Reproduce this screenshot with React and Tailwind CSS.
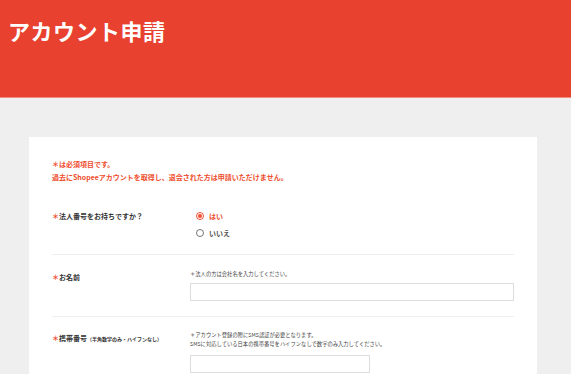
import React, { useState } from 'react'

const font = { fontFamily: '"Noto Sans CJK JP", "Noto Sans", sans-serif' }

function Radio({ checked, label, onClick }) {
  return (
    <button onClick={onClick} className="flex items-center gap-[5px] h-[10px]">
      <span
        className={
          'w-[8px] h-[8px] rounded-full border flex items-center justify-center ' +
          (checked ? 'border-[#ee4d2d]' : 'border-[#777]')
        }
      >
        {checked && <span className="w-[4px] h-[4px] rounded-full bg-[#ee4d2d]" />}
      </span>
      <span className={'text-[7px] font-bold ' + (checked ? 'text-[#ee4d2d]' : 'text-[#555]')}>{label}</span>
    </button>
  )
}

export default function App() {
  const [hasNumber, setHasNumber] = useState(true)

  return (
    <div className="min-h-[374px] bg-[#efefef]" style={font}>
      <div className="h-[98px] bg-[#e9412f] border-b border-[#f28c7e] pl-[8px] pt-[14px]">
        <h1 className="text-[22px] leading-[32px] font-bold text-white tracking-[0.5px]">アカウント申請</h1>
      </div>

      <div className="ml-[29px] mt-[39px] w-[508px] bg-white px-[23px] pt-[21px] pb-[20px]">
        <div className="text-[7px] leading-[13px] font-bold text-[#ee4d2d]">
          <p>＊は必須項目です。</p>
          <p>過去にShopeeアカウントを取得し、退会された方は申請いただけません。</p>
        </div>

        <div className="mt-[26px] flex border-b border-[#eeeeee] pb-[16px]">
          <div className="w-[142px] text-[7px] leading-[12px] font-bold text-[#333]">
            <span className="text-[#ee4d2d]">＊</span>法人番号をお持ちですか？
          </div>
          <div className="flex flex-col gap-[7px] pl-[2px] pt-[1px]">
            <Radio checked={hasNumber} label="はい" onClick={() => setHasNumber(true)} />
            <Radio checked={!hasNumber} label="いいえ" onClick={() => setHasNumber(false)} />
          </div>
        </div>

        <div className="flex border-b border-[#eeeeee] pt-[15px] pb-[15px]">
          <div className="w-[138px] text-[7px] leading-[12px] font-bold text-[#333] pt-[1px]">
            <span className="text-[#ee4d2d]">＊</span>お名前
          </div>
          <div className="flex-1 flex flex-col gap-[4px]">
            <p className="text-[5.3px] leading-[9px] text-[#444]">＊法人の方は会社名を入力してください。</p>
            <input className="h-[18px] w-full border border-[#dddddd] outline-none" />
          </div>
        </div>

        <div className="flex pt-[14px]">
          <div className="w-[138px] text-[7px] leading-[12px] font-bold text-[#333] pt-[1px]">
            <span className="text-[#ee4d2d]">＊</span>携帯番号<span className="text-[5px]">（半角数字のみ・ハイフンなし）</span>
          </div>
          <div className="flex-1 flex flex-col">
            <p className="text-[5.3px] leading-[9px] text-[#444]">＊アカウント登録の際にSMS認証が必要となります。</p>
            <p className="text-[5.3px] leading-[9px] text-[#444]">SMSに対応している日本の携帯番号をハイフンなしで数字のみ入力してください。</p>
            <input className="mt-[6px] h-[18px] w-[180px] border border-[#dddddd] outline-none" />
          </div>
        </div>
      </div>
    </div>
  )
}
